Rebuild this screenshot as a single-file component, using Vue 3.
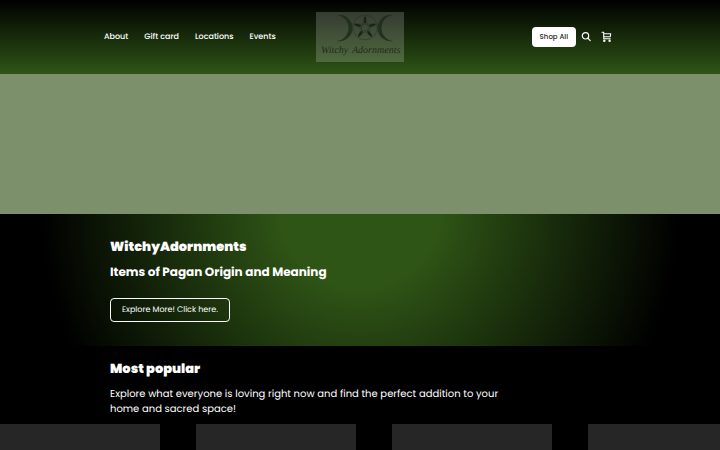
<script setup>
import { ref } from 'vue'

const links = ref(['About', 'Gift card', 'Locations', 'Events'])
const products = ref([1, 2, 3, 4])
</script>

<template>
    <div class="page">
        <header class="header">
            <nav class="nav">
                <a v-for="link in links" :key="link" class="nav-link" href="#">{{ link }}</a>
            </nav>
            <a class="logo" href="#">
                <svg class="logo-art" viewBox="0 0 88 50" role="img" aria-label="Witchy Adornments">
                    <g fill="#1d2c1b" opacity="0.85">
                        <path d="M21 3A13.2 13.2 0 1 1 21 29A13.1 13.1 0 0 0 21 3Z" />
                        <path d="M77 3A13.2 13.2 0 1 0 77 29A13.1 13.1 0 0 1 77 3Z" />
                    </g>
                    <g fill="none" stroke="#1d2c1b" opacity="0.75">
                        <circle cx="49" cy="15.5" r="12.3" stroke-width="0.6" />
                        <path d="M49 5L55.2 24L39 12.2H59L42.8 24Z" stroke-width="0.6" />
                    </g>
                    <g fill="#18241a">
                        <ellipse v-for="n in 5" :key="n" cx="49" cy="7.8" rx="1.2" ry="3.6" :transform="`rotate(${n * 72} 49 15.5)`" />
                    </g>
                    <text x="5" y="41" fill="#1d2c1b">Witchy</text>
                    <text x="36" y="41" fill="#1d2c1b">Adornments</text>
                </svg>
            </a>
            <div class="actions">
                <button class="shop-button">Shop All</button>
                <div class="icons">
                    <button class="icon-button" aria-label="Search">
                        <svg viewBox="0 0 12 12" fill="none" stroke="#fff" stroke-width="1.2" stroke-linecap="round">
                            <circle cx="5.5" cy="4.8" r="3.2" />
                            <path d="M7.9 7.2L10.2 9.6" />
                        </svg>
                    </button>
                    <button class="icon-button" aria-label="Cart">
                        <svg viewBox="0 0 12 12" fill="none" stroke="#fff" stroke-width="1.1" stroke-linecap="round" stroke-linejoin="round">
                            <path d="M2 1.2H3.7V7.8H10.2M3.7 2.7H10.7L10.2 5.8H3.7" />
                            <circle cx="4.3" cy="9.7" r="0.7" />
                            <circle cx="9.6" cy="9.7" r="0.7" />
                        </svg>
                    </button>
                </div>
            </div>
        </header>

        <section class="hero">
            <div class="banner"></div>
            <div class="hero-inner">
                <h1 class="title">WitchyAdornments</h1>
                <h2 class="subtitle">Items of Pagan Origin and Meaning</h2>
                <a class="explore" href="#">Explore More! Click here.</a>
            </div>
        </section>

        <section class="popular">
            <div class="popular-inner">
                <h2 class="title">Most popular</h2>
                <p class="intro">Explore what everyone is loving right now and find the perfect addition to your home and sacred space!</p>
            </div>
            <div class="products">
                <div v-for="product in products" :key="product" class="product"></div>
            </div>
        </section>
    </div>
</template>

<style>
body {
    margin: 0;
    background: #000;
}
</style>

<style scoped>
.page {
    height: 100vh;
    overflow: hidden;
    color: #fff;
    font-family: Poppins, Inter, sans-serif;
    text-rendering: geometricPrecision;
}

.header {
    display: grid;
    grid-template-columns: 1fr auto 1fr;
    align-items: center;
    padding: 12px 104px;
    background: linear-gradient(#000, #2f5516);
}

.nav {
    display: flex;
    gap: 16px;
}

.nav-link {
    color: #fff;
    font-size: 8px;
    font-weight: 500;
    line-height: 12px;
    text-decoration: none;
    white-space: nowrap;
}

.logo {
    display: block;
    width: 88px;
    background: rgba(255, 255, 255, 0.19);
}

.logo-art {
    display: block;
    width: 100%;
}

.logo-art text {
    font-family: "Liberation Serif", serif;
    font-size: 10px;
    font-style: italic;
}

.actions {
    display: flex;
    align-items: center;
    justify-content: flex-end;
    gap: 4px;
    padding-right: 4px;
}

.icons {
    display: flex;
    gap: 8px;
}

.shop-button {
    height: 20px;
    padding: 0 8px;
    border: 0;
    border-radius: 4px;
    background: #fff;
    color: #1c1c1c;
    font-family: inherit;
    font-size: 7px;
    font-weight: 500;
}

.icon-button {
    width: 12px;
    height: 12px;
    padding: 0;
    border: 0;
    background: none;
}

.icon-button svg {
    display: block;
}

.hero {
    background: radial-gradient(circle at center, #2f5516 20%, #000 83%);
}

.banner {
    height: 140px;
    background: #7c916b;
}

.hero-inner {
    display: flex;
    flex-direction: column;
    align-items: flex-start;
    padding: 24px 110px;
}

.title {
    margin: 0;
    font-size: 13px;
    font-weight: 900;
    line-height: 18px;
}

.subtitle {
    margin: 8px 0 16px;
    font-size: 12px;
    font-weight: 700;
    line-height: 18px;
}

.explore {
    padding: 0 11px;
    border: 1px solid #fff;
    border-radius: 4px;
    color: #fff;
    font-size: 8px;
    line-height: 22px;
    text-decoration: none;
}

.popular-inner {
    max-width: 400px;
    padding: 14px 110px 8px;
}

.intro {
    margin: 8px 0 0;
    font-size: 10px;
    line-height: 15px;
}

.products {
    display: grid;
    grid-template-columns: repeat(4, 160px);
    gap: 36px;
}

.product {
    height: 160px;
    background: #262626;
}
</style>
